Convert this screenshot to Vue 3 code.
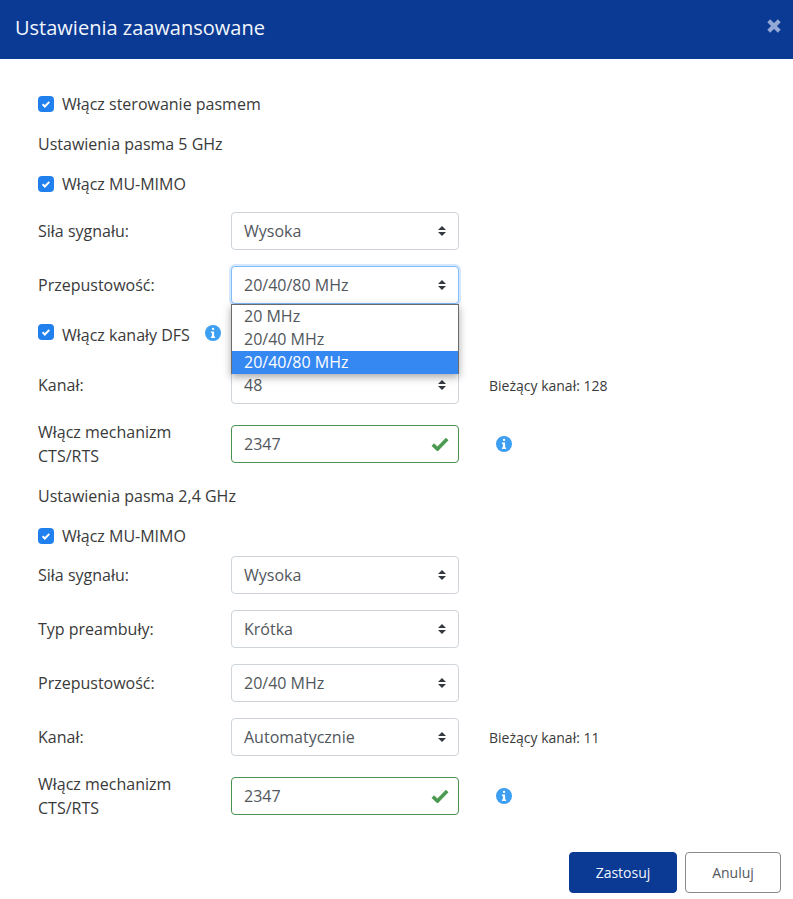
<template>
  <div class="modal">
    <header class="modal-head">
      <h1>Ustawienia zaawansowane</h1>
      <svg class="close" viewBox="0 0 14 14" aria-label="Zamknij">
        <path d="M2.4 2.4l9.2 9.2M11.6 2.4l-9.2 9.2" />
      </svg>
    </header>

    <div class="modal-body">
      <label class="check gap-16">
        <span class="box"><svg viewBox="0 0 16 16"><path d="M4.6 8.2l2.3 2.3 4.4-4.6" /></svg></span>
        Włącz sterowanie pasmem
      </label>
      <p class="section gap-16">Ustawienia pasma 5 GHz</p>
      <label class="check gap-16">
        <span class="box"><svg viewBox="0 0 16 16"><path d="M4.6 8.2l2.3 2.3 4.4-4.6" /></svg></span>
        Włącz MU-MIMO
      </label>

      <div class="row gap-16">
        <span class="label">Siła sygnału:</span>
        <div class="select">Wysoka</div>
      </div>
      <div class="row gap-17">
        <span class="label">Przepustowość:</span>
        <div class="select-wrap">
          <div class="select focused">20/40/80 MHz</div>
          <ul class="dropdown">
            <li v-for="opt in bandwidths" :key="opt" :class="{ active: opt === '20/40/80 MHz' }">{{ opt }}</li>
          </ul>
        </div>
      </div>
      <label class="check dfs gap-21">
        <span class="box"><svg viewBox="0 0 16 16"><path d="M4.6 8.2l2.3 2.3 4.4-4.6" /></svg></span>
        <span class="dfs-text">Włącz kanały DFS</span>
        <svg class="info dfs-info" viewBox="0 0 16 16">
          <circle cx="8" cy="8" r="8" />
          <rect x="6.9" y="2.8" width="2.3" height="2.3" rx="1" />
          <path d="M5.9 6.6h3.2v5h1v1.3H5.9v-1.3h1V7.9h-1z" />
        </svg>
      </label>
      <div class="row gap-21">
        <span class="label">Kanał:</span>
        <div class="select">48</div>
        <span class="note">Bieżący kanał: 128</span>
      </div>
      <div class="row gap-21">
        <span class="label">Włącz mechanizm<br />CTS/RTS</span>
        <div class="valid">
          2347
          <svg viewBox="0 0 18 14"><path d="M1.8 7.6l4.7 4.4L16.2 2" /></svg>
        </div>
        <svg class="info row-info" viewBox="0 0 16 16">
          <circle cx="8" cy="8" r="8" />
          <rect x="6.9" y="2.8" width="2.3" height="2.3" rx="1" />
          <path d="M5.9 6.6h3.2v5h1v1.3H5.9v-1.3h1V7.9h-1z" />
        </svg>
      </div>

      <p class="section gap-16">Ustawienia pasma 2,4 GHz</p>
      <label class="check gap-8">
        <span class="box"><svg viewBox="0 0 16 16"><path d="M4.6 8.2l2.3 2.3 4.4-4.6" /></svg></span>
        Włącz MU-MIMO
      </label>
      <div class="row gap-16">
        <span class="label">Siła sygnału:</span>
        <div class="select">Wysoka</div>
      </div>
      <div class="row gap-16">
        <span class="label">Typ preambuły:</span>
        <div class="select">Krótka</div>
      </div>
      <div class="row gap-16">
        <span class="label">Przepustowość:</span>
        <div class="select">20/40 MHz</div>
      </div>
      <div class="row gap-21">
        <span class="label">Kanał:</span>
        <div class="select">Automatycznie</div>
        <span class="note">Bieżący kanał: 11</span>
      </div>
      <div class="row">
        <span class="label">Włącz mechanizm<br />CTS/RTS</span>
        <div class="valid">
          2347
          <svg viewBox="0 0 18 14"><path d="M1.8 7.6l4.7 4.4L16.2 2" /></svg>
        </div>
        <svg class="info row-info" viewBox="0 0 16 16">
          <circle cx="8" cy="8" r="8" />
          <rect x="6.9" y="2.8" width="2.3" height="2.3" rx="1" />
          <path d="M5.9 6.6h3.2v5h1v1.3H5.9v-1.3h1V7.9h-1z" />
        </svg>
      </div>
    </div>

    <footer class="modal-foot">
      <button class="btn primary">Zastosuj</button>
      <button class="btn">Anuluj</button>
    </footer>
  </div>
</template>

<script setup>
const bandwidths = ['20 MHz', '20/40 MHz', '20/40/80 MHz']
</script>

<style>
html,
body {
  margin: 0;
  background: #fff;
}
</style>

<style scoped>
.modal {
  width: 793px;
  height: 899px;
  font-family: 'Open Sans', sans-serif;
  font-size: 16px;
  color: #3a3a3a;
  background: #fff;
  overflow: hidden;
}

.modal-head {
  height: 59px;
  padding: 0 12px 4px 15px;
  display: flex;
  align-items: center;
  justify-content: space-between;
  background: #0a3a94;
  box-sizing: border-box;
}

.modal-head h1 {
  margin: 0;
  font-size: 20px;
  font-weight: 400;
  color: #f2f6fc;
}

.close {
  width: 16px;
  height: 16px;
  margin-bottom: 4px;
  margin-right: -1px;
}

.close path {
  fill: none;
  stroke: #94a9d6;
  stroke-width: 3.6;
}

.modal-body {
  padding: 33px 0 0 38px;
}

.gap-8 {
  margin-bottom: 8px;
}

.gap-16 {
  margin-bottom: 16px;
}

.gap-17 {
  margin-bottom: 17px;
}

.gap-21 {
  margin-bottom: 21px;
}

.check {
  height: 24px;
  display: flex;
  align-items: center;
  line-height: 24px;
}

.box {
  width: 16px;
  height: 16px;
  margin-right: 8px;
  border-radius: 4px;
  background: #1f80ee;
  flex: none;
}

.box svg {
  display: block;
  width: 16px;
  height: 16px;
  fill: none;
  stroke: #fff;
  stroke-width: 2;
}

.dfs .box {
  margin-top: -2px;
}

.dfs-text {
  margin-top: 4px;
}

.section {
  margin-top: 0;
  line-height: 24px;
}

.row {
  height: 38px;
  display: flex;
  align-items: center;
}

.label {
  width: 193px;
  line-height: 24px;
  flex: none;
}

.select-wrap {
  position: relative;
}

.select {
  width: 228px;
  height: 38px;
  padding: 0 12px;
  box-sizing: border-box;
  border: 1px solid #ced4da;
  border-radius: 4px;
  line-height: 36px;
  color: #52575c;
  background: #fff url("data:image/svg+xml,%3Csvg xmlns='http://www.w3.org/2000/svg' viewBox='0 0 4 5'%3E%3Cpath fill='%23343a40' d='M2 0L0 2h4zm0 5L0 3h4z'/%3E%3C/svg%3E") no-repeat right 12px center / 8px 10px;
}

.focused {
  border-color: #80bdff;
  box-shadow: 0 0 0 2px #d5e7fb;
}

.dropdown {
  position: absolute;
  z-index: 2;
  top: 38px;
  left: 0;
  width: 228px;
  margin: 0;
  padding: 0;
  box-sizing: border-box;
  list-style: none;
  border: 1px solid #6b6b6b;
  border-bottom: none;
  background: #fff;
  box-shadow: 0 3px 8px rgba(0, 0, 0, 0.35);
  color: #52575c;
}

.dropdown li {
  height: 23px;
  padding: 0 12px;
  line-height: 23px;
}

.dropdown li.active {
  color: #fff;
  background: #3587f2;
}

.note {
  margin-left: 30px;
  font-size: 14px;
}

.valid {
  width: 228px;
  height: 38px;
  padding: 0 9px 0 12px;
  display: flex;
  align-items: center;
  justify-content: space-between;
  box-sizing: border-box;
  border: 1px solid #4b9150;
  border-radius: 4px;
  color: #52575c;
}

.valid svg {
  width: 18px;
  height: 14px;
  fill: none;
  stroke: #4b9a50;
  stroke-width: 3.6;
}

.info {
  width: 16px;
  height: 16px;
  flex: none;
}

.info circle {
  fill: #3c9ff2;
}

.info rect,
.info path {
  fill: #fff;
}

.dfs-info {
  margin-left: 15px;
}

.row-info {
  margin-left: 37px;
}

.modal-foot {
  margin-top: 37px;
  padding-right: 12px;
  display: flex;
  justify-content: flex-end;
  gap: 8px;
}

.btn {
  width: 96px;
  height: 41px;
  padding: 0;
  border: 1px solid #8a8a8a;
  border-radius: 4px;
  font-family: inherit;
  font-size: 14px;
  color: #52575c;
  background: #fff;
}

.btn.primary {
  width: 108px;
  border-color: #0a3a94;
  color: #f2f6fc;
  background: #0a3a94;
}
</style>
